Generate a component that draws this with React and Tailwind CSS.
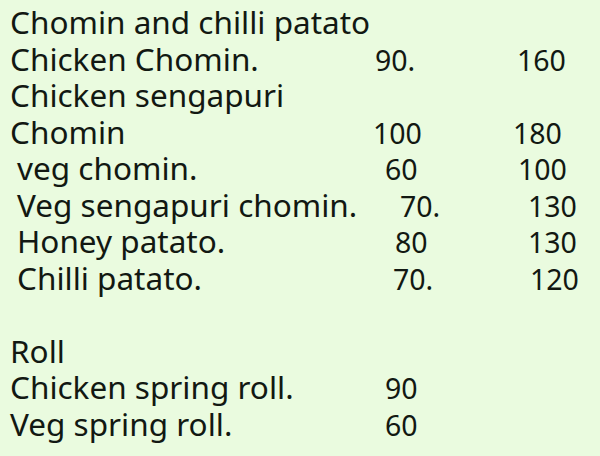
function Row({ name, nameCls, p1, p1Cls, p2 }) {
  return (
    <div className="flex h-[36.5px] items-baseline whitespace-nowrap">
      <span className={nameCls}>{name}</span>
      {p1 && <span className={"text-[28.5px] " + p1Cls}>{p1}</span>}
      {p2 && <span className="text-[28.5px]">{p2}</span>}
    </div>
  );
}

export default function App() {
  return (
    <div className="w-[600px] h-[456px] overflow-hidden bg-[#eafbdf] pt-[4px] font-['Noto_Sans',sans-serif] text-[31.5px] leading-[36.5px] text-[#121812]">
      <Row name="Chomin and chilli patato" nameCls="pl-[10px]" />
      <Row name="Chicken Chomin." nameCls="pl-[10px] w-[375px]" p1="90." p1Cls="w-[142px]" p2="160" />
      <Row name="Chicken sengapuri" nameCls="pl-[10px]" />
      <Row name="Chomin" nameCls="pl-[10px] w-[373px]" p1="100" p1Cls="w-[140px]" p2="180" />
      <Row name="veg chomin." nameCls="pl-[17px] w-[385px]" p1="60" p1Cls="w-[133px]" p2="100" />
      <Row name="Veg sengapuri chomin." nameCls="pl-[17px] w-[400px]" p1="70." p1Cls="w-[128px]" p2="130" />
      <Row name="Honey patato." nameCls="pl-[17px] w-[395px]" p1="80" p1Cls="w-[133px]" p2="130" />
      <Row name="Chilli patato." nameCls="pl-[17px] w-[393px]" p1="70." p1Cls="w-[137px]" p2="120" />
      <div className="h-[36.5px]" />
      <Row name="Roll" nameCls="pl-[10px]" />
      <Row name="Chicken spring roll." nameCls="pl-[10px] w-[385px]" p1="90" p1Cls="" />
      <Row name="Veg spring roll." nameCls="pl-[10px] w-[385px]" p1="60" p1Cls="" />
    </div>
  );
}
